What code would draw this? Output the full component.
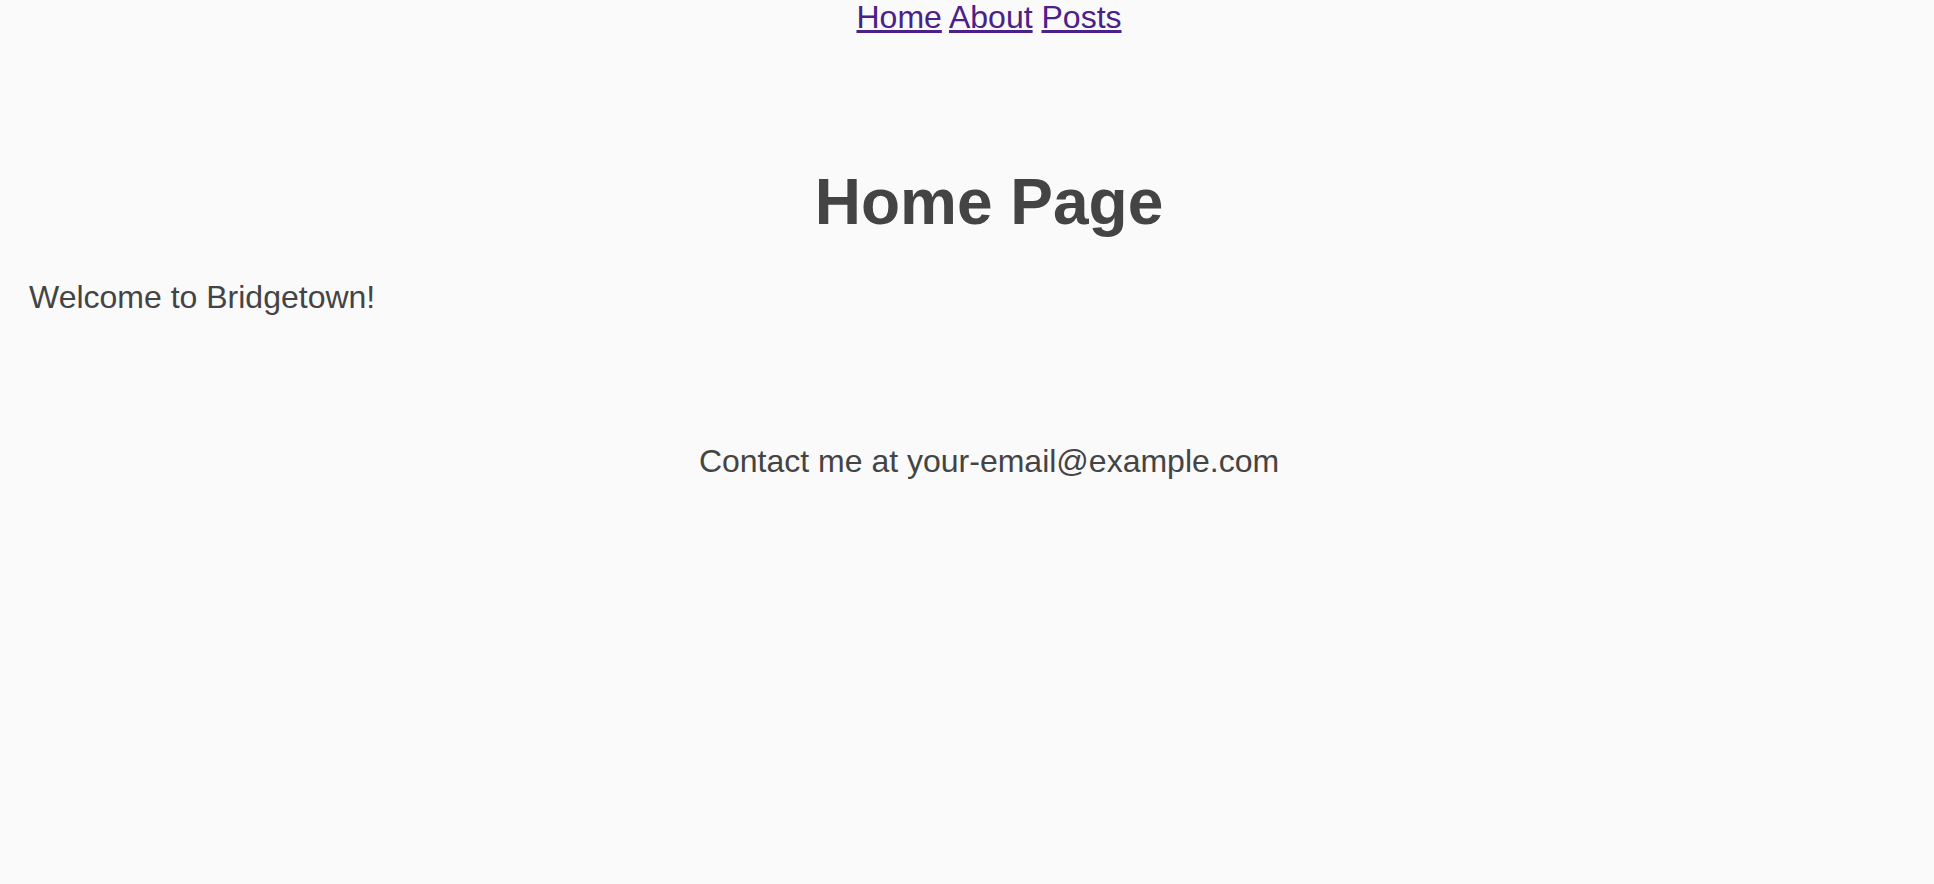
const App = () => {
  return (
    <div className="min-h-screen bg-[#fafafa] text-[#444444] font-['Liberation_Sans',Arial,sans-serif] text-[32px]">
      <nav className="pl-[44px] text-center leading-[34px]">
        <a href="#" className="text-[#4b2088] underline">Home</a>{' '}
        <a href="#" className="text-[#4b2088] underline">About</a>{' '}
        <a href="#" className="text-[#4b2088] underline">Posts</a>
      </nav>

      <main className="pl-[29px]">
        <h1 className="mt-[130px] pl-[15px] text-center text-[64px] font-bold leading-[77px]">
          Home Page
        </h1>
        <p className="mt-[32px] leading-[48px]">Welcome to Bridgetown!</p>
      </main>

      <footer className="mt-[116px] pl-[44px] text-center leading-[48px]">
        Contact me at your-email@example.com
      </footer>
    </div>
  )
}

export default App;
